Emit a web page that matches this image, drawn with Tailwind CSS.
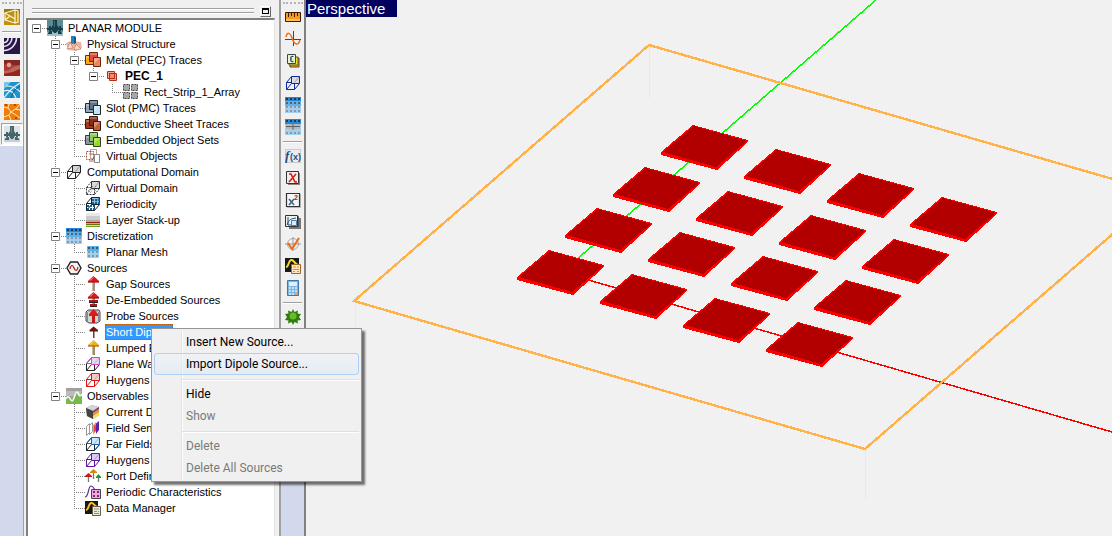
<!DOCTYPE html>
<html lang="en">
<head>
  <meta charset="UTF-8" />
  <meta name="viewport" content="width=device-width, initial-scale=1" />
  <title>Planar Module</title>
  <script src="https://cdn.jsdelivr.net/npm/@tailwindcss/browser@4"></script>
</head>
<body class="bg-[#f0f0f0] h-screen overflow-hidden flex font-['Liberation_Sans',Arial,sans-serif] text-[11px] leading-4 text-black">

  <!-- Module toolbar -->
  <nav aria-label="Modules" class="w-[23px] shrink-0 flex flex-col bg-[#d3d9ed]">
    <div id="moduleBar" class="bg-[#f0f0f0] flex flex-col items-center border-b border-white"></div>
  </nav>

  <!-- Navigation tree -->
  <section class="w-64 shrink-0 flex flex-col border-l border-[#a0a0a0] pl-0.5">
    <div class="h-[18px] shrink-0 flex items-center gap-1.5 pl-1.5 pt-1 pr-2">
      <div class="flex-1 flex flex-col gap-0.5">
        <div class="h-0.5 border-t border-[#a0a0a0] bg-white"></div>
        <div class="h-0.5 border-t border-[#a0a0a0] bg-white"></div>
      </div>
      <button type="button" aria-label="Restore panel" class="size-[11px] flex items-center justify-center border border-t-white border-l-white border-b-[#696969] border-r-[#696969]">
        <span class="w-[7px] h-1.5 border border-t-2 border-black"></span>
      </button>
    </div>
    <div class="flex-1 min-h-0 mr-1 border-2 border-r border-b-0 border-t-[#808080] border-l-[#808080] border-r-[#e3e3e3] bg-white overflow-hidden">
      <ul id="tree" role="tree" aria-label="Planar module"></ul>
    </div>
  </section>

  <!-- Tools toolbar -->
  <nav aria-label="Tools" class="w-[27px] shrink-0 flex flex-col bg-[#d3d9ed] border-x-2 border-l-[#a0a0a0] border-r-[#808080]">
    <div id="toolBar" class="bg-[#f0f0f0] flex flex-col items-center border-b-2 border-[#a0a0a0]"></div>
  </nav>

  <!-- 3D view -->
  <main class="flex-1 min-w-0 relative bg-[#f1f1f1]">
    <svg id="scene" class="absolute inset-0 w-full h-full" viewBox="306 0 806 536" preserveAspectRatio="xMinYMin slice" shape-rendering="crispEdges" role="img" aria-label="Patch array">
      <g stroke="#fae6d0" stroke-width="1">
        <path d="M355 301V351M649 45V98M865 449V500" />
      </g>
      <path d="M561 273L876 0" stroke="#00ff00" stroke-width="1.5" />
      <path d="M561 272L1112 432" stroke="#ff0000" stroke-width="1.5" />
      <g id="tiles"></g>
      <path d="M1130 184L649 45L354 301L865 449L1130 219" fill="none" stroke="#ffb347" stroke-width="2.4" />
    </svg>
    <h1 class="relative w-[91px] h-[17px] bg-[#00005f] text-white text-[15px] leading-[17px] pl-px">Perspective</h1>
  </main>

  <!-- Context menu -->
  <div role="menu" class="absolute left-[151px] top-[328px] w-[211px] p-0.5 border border-[#979797] bg-[#f0f0f0] shadow-[3px_3px_2px_rgba(0,0,0,0.55)] font-[Roboto,sans-serif] text-[12px]">
    <div class="absolute left-[29px] inset-y-0.5 w-0.5 bg-white border-l border-[#e2e3e3]"></div>
    <button type="button" role="menuitem" class="relative block w-full h-[22px] pl-8 text-left">Insert New Source...</button>
    <button type="button" role="menuitem" class="relative block w-full h-[22px] pl-[31px] text-left rounded-[3px] border border-[#aecff7] bg-linear-to-b from-[#eff3f9]/60 to-[#dfe8f6]/60">Import Dipole Source...</button>
    <div class="h-2 ml-7 pt-1"><div class="relative h-0.5 bg-white border-t border-[#e0e0e0]"></div></div>
    <button type="button" role="menuitem" class="relative block w-full h-[22px] pl-8 text-left">Hide</button>
    <button type="button" role="menuitem" disabled class="relative block w-full h-[22px] pl-8 text-left text-[#7a7a7a]">Show</button>
    <div class="h-2 ml-7 pt-1"><div class="relative h-0.5 bg-white border-t border-[#e0e0e0]"></div></div>
    <button type="button" role="menuitem" disabled class="relative block w-full h-[22px] pl-8 text-left text-[#7a7a7a]">Delete</button>
    <button type="button" role="menuitem" disabled class="relative block w-full h-[22px] pl-8 text-left text-[#7a7a7a]">Delete All Sources</button>
  </div>

  <script>
    // All icons are drawn on a 16x16 grid
    const svg = (body) => `<svg class="size-4 shrink-0" viewBox="0 0 16 16" fill="none" aria-hidden="true">${body}</svg>`;

    const cube = (line, fill, face = line, dash = "") => svg(`
      <path d="M1.5 7.500h8v7h-8zM1.5 7.500l5-6M9.5 14.500l5-6M1.5 14.500l5-6" stroke="${line}" ${dash}/>
      <path d="M6.500 1.500h8v7h-8z" fill="${fill}" stroke="${face}"/>
      <path d="M9.500 7.500l5-6" stroke="${face}" opacity=".35"/>`);

    const stack = (a, b, c, line = "#3a2a22") => svg(`
      <path d="M.5 3.500h8v9h-8z" fill="${a}" stroke="${line}"/>
      <path d="M1 4h7v2H1z" fill="#fff" opacity=".3"/>
      <path d="M4.500 .5h8v9h-8z" fill="${b}" stroke="${line}"/>
      <path d="M5 1h7v2H5z" fill="#fff" opacity=".25"/>
      <path d="M8.500 5.500h7v9h-7z" fill="${c}" stroke="${line}"/>
      <path d="M9 6h6L9 12z" fill="#fff" opacity=".3"/>`);

    const gridDots = (rows, cols, color) => {
      let d = "";
      for (const y of rows) for (const x of cols) d += `M${x} ${y}h2v2h-2z`;
      return `<path d="${d}" fill="${color}"/>`;
    };

    const arrow = (head, stem, extra = "") => svg(`
      <path d="M7 6h3v9H7z" fill="${stem}"/><path d="M7 6h1v9H7z" fill="#fff" opacity=".4"/>
      <path d="M8.500 0L14 5v1.500H3V5z" fill="${head}"/><path d="M3 6h11" stroke="#500" opacity=".5"/>
      <path d="M5 4.500L8.500 1.500" stroke="#fff" opacity=".5"/>${extra}`);

    const plane = (bg, fg, glow) => svg(`
      <path d="M0 0h16v16H0z" fill="${bg}"/>
      <path d="M0 12h16v4H0z" fill="${glow}"/>
      <path d="M6 0h4v5l2 3h4v2H0V8h4l2-3z" fill="${fg}"/>
      <path d="M2 6h2v5H2zM12 6h2v5h-2zM5 10h6l-2 3H7zM1 13l2-2h2v3H1zM15 13l-2-2h-2v3h4z" fill="${fg}"/>
      <path d="M7 1h1v6H7z" fill="${glow}" opacity=".35"/>`);

    const icons = {
      cad: svg(`<path d="M0 0h16v16H0z" fill="#c09010"/><path d="M0 0h16v5L8 2 0 8z" fill="#806008" opacity=".5"/>
        <path d="M1 4l10-3v13L1 11l5-4zM11 1l3 1v11l-3 1M1 4v7M6 7l5 3" stroke="#fff8d8" stroke-width="1.200"/>`),
      waves: svg(`<path d="M0 0h16v16H0z" fill="#2a1748"/>
        <path d="M0 4.500a4 4 0 0 0 4-4.500M0 8.500a9 9 0 0 0 8-8.500M0 12.500a13 13 0 0 0 12.500-12.500" transform="matrix(-1 0 0 1 16 0) matrix(-1 0 0 1 16 0)" stroke="#e9e4f2" stroke-width="1.600"/>`),
      terrain: svg(`<path d="M0 0h16v16H0z" fill="#a83c32"/><path d="M0 0h16v5H9L5 2 0 5z" fill="#822820"/>
        <path d="M0 11l5-1 4-3 7-2v4l-6 3-4 1-6 1z" fill="#c87468" opacity=".7"/><circle cx="5" cy="5" r="2.200" fill="#e0a094"/>
        <path d="M0 14l9-2 7-3v7H0z" fill="#94261e"/>`),
      beams: svg(`<path d="M0 0h16v16H0z" fill="#2193cc"/><path d="M0 0h7L0 7z" fill="#7cc4e4"/>
        <path d="M0 16C4 10 9 5 16 1M0 9c6-2 10 2 12 7M2 4c6 0 11 2 14 6" stroke="#e2f6ff" stroke-width="1.200"/>
        <path d="M7 16c2-6 4-9 9-12" stroke="#0a5d96"/>`),
      cracks: svg(`<path d="M0 0h16v16H0z" fill="#f07c0c"/><path d="M0 3l4 1 3 4 6-4 3-4M7 8l-2 3-5 2M5 11l2 5M7 8l5 3 4 3M4 4l1-4M11 5l5 1" stroke="#ffe9b0"/>
        <path d="M1 1h2M10 1h2M11 14h2" stroke="#c04800" stroke-width="2"/>`),
      planarActive: plane("#dfe4e5", "#44646a", "#c6d0d2"),
      planar: plane("#5d8b94", "#153f4a", "#9fc0c5"),
      physical: svg(`<path d="M0 7l5-2 10 1 1 6-6 3-8-1z" fill="#eeb4a0"/><path d="M1 13l3-7 3 6zM8 14l2-6 5 5z" fill="#f8dccf" stroke="#c08068" stroke-width=".7"/>
        <path d="M5 0h4l1 1v6l-4 1-1-1z" fill="#2c80b8"/><path d="M8 1h2v6l-2 1z" fill="#135a8a"/>`),
      metal: stack("#f6a820", "#e05038", "#ee8458", "#6a2a14"),
      pec: svg(`<path d="M3.500 3.500h7v7h-7z" fill="#f4a890" stroke="#b03018"/><path d="M5.500 5.500h7v7h-7z" fill="#ee8468" fill-opacity=".8" stroke="#b03018"/><path d="M5.500 5.500h5v5h-5z" stroke="#b03018"/>`),
      array: svg(`<path d="M.5 .5h6v6h-6zM8.500 .5h6v6h-6zM.5 8.500h6v6h-6zM8.500 8.500h6v6h-6z" fill="#a8a8a8" stroke="#444" stroke-dasharray="2 1"/>`),
      slot: stack("#93a7b8", "#5f7486", "#c2e2f6", "#20282e"),
      sheet: stack("#a03a1a", "#84301a", "#c06038", "#3c180c"),
      embedded: stack("#8898a0", "#92c860", "#98d820", "#2c4420"),
      virtualObj: svg(`<path d="M1.500 3.500h7v8h-7z" stroke="#a05040" stroke-dasharray="2 1"/><path d="M5.500 1.500h6v9h-6z" stroke="#804038" stroke-dasharray="1 1"/>
        <path d="M9.500 6.500h5v8h-5z" fill="#fff" stroke="#888"/><path d="M4 13h5M4 6h4" stroke="#c06050"/>`),
      domain: cube("#222", "#d4d4d4"),
      vdomain: cube("#333", "#d8d8d8", "#333", 'stroke-dasharray="2 1"').replace("</svg>", '<path d="M3 11l5-5M5 13l6-7M9 12l4-4" stroke="#777" stroke-dasharray="1 1"/></svg>'),
      periodic: cube("#123", "#8cc8e4").replace("</svg>", gridDots([3, 6], [7, 10, 13], "#15608c") + gridDots([9, 12], [2, 5, 8], "#15608c") + "</svg>"),
      layers: svg(`<path d="M1 2h14v8H1z" fill="#ccc"/><path d="M1 1h14v3H1z" fill="#e9e9e9"/><path d="M1 8h14v2H1z" fill="#aaa"/>
        <path d="M1 10.500h14" stroke="#9a2010"/><path d="M1 11.500h14" stroke="#e8b020"/><path d="M1 12.500h14" stroke="#6a7010"/><path d="M1 13.500h14" stroke="#f0e040"/><path d="M1 14.500h14" stroke="#70a020"/>`),
      mesh: svg(`<path d="M0 0h16v16H0z" fill="#a4cfec"/><path d="M0 0h16v9H0z" fill="#62b0e4"/><path d="M0 0h16v4H0z" fill="#2388d8"/>${gridDots([1], [1, 5, 9, 13], "#263850")}${gridDots([5], [1, 5, 9, 13], "#46647e")}${gridDots([9, 13], [1, 5, 9, 13], "#8599a8")}`),
      meshSmall: svg(`<path d="M2 2h12v12H2z" fill="#9fd0f0"/><path d="M2 2h12v5H2z" fill="#5eb0e6"/>${gridDots([3], [3, 7, 11], "#3a5878")}${gridDots([7, 11], [3, 7, 11], "#8098a8")}`),
      meshCut: svg(`<path d="M0 0h16v16H0z" fill="#a4cfec"/><path d="M0 0h16v5H0z" fill="#2388d8"/>${gridDots([1], [1, 5, 9, 13], "#263850")}${gridDots([13], [1, 5, 9, 13], "#8599a8")}<path d="M1 5h14v5H1z" fill="#b4b8ba"/><path d="M1 7.500h14M8 5v6" stroke="#5c6468"/>`),
      sources: svg(`<path d="M4.500 2h7l3.500 6-3.500 6h-7L1 8z" fill="#f2f2f2" stroke="#222" stroke-width="1.400"/><path d="M4 9c1-5 3-4 4-1s3 4 4-1" stroke="#c01010" stroke-width="1.200"/>`),
      gap: arrow("#e01818", "#a89080"),
      deembed: arrow("#e01818", "#888", '<path d="M4 8h9v2H4zM5 12h7v2H5z" fill="#b01818"/><path d="M4 10.500h9M5 14.500h7" stroke="#222"/>'),
      probe: svg(`<path d="M3 2h11l1 2v9l-3 2H4l-3-2V4z" fill="#d4d4d4" stroke="#444"/><path d="M3 3h10M2.500 4v9M13.500 4v9" stroke="#888"/><path d="M7 6h3v9H7z" fill="#c01818"/><path d="M8.500 1L13 6v2H4V6z" fill="#e01818"/>`),
      dipole: svg(`<path d="M8 7h1.500v7H8z" fill="#604040"/><path d="M8.500 2.500L13 6v1.500H4.500V6z" fill="#6a1414"/>`),
      lumped: arrow("#f0b010", "#a09060"),
      planeWave: cube("#222", "#dcdce4", "#e040d8").replace("</svg>", '<path d="M1.500 7.500l5-6M1.500 7.500h5" stroke="#e040d8"/></svg>'),
      huygensSrc: cube("#d81414", "#f4cccc"),
      observables: svg(`<path d="M0 0h16v16H0z" fill="#a0a0a0"/><path d="M0 3h16v5H0z" fill="#bcbcbc"/><path d="M0 10l3-3 3 6 4-9 3 6 3-8v14H0z" fill="#78b848"/><path d="M0 11c3-6 4 2 6 2s3-9 5-9 2 7 5 2" stroke="#f4fff0" stroke-width="1.500"/>`),
      current: svg(`<path d="M1 4l6-3 7 2v8l-6 4-6-3z" fill="#888"/><path d="M1 4l6-3 7 2-6 4z" fill="#d4d4d4"/><path d="M1 4l7 3v8l-6-3z" fill="#444"/><path d="M8 7l6-4v2L8 9z" fill="#8030a0"/><path d="M8 9l6-4v3l-6 4z" fill="#f09030"/><path d="M8 12l6-4v3l-6 4z" fill="#f8e060"/>`),
      field: svg(`<path d="M1.500 6.500l3-3v9l-3 3zM4.500 5.500l3-3v9l-3 3z" fill="#fff" stroke="#999"/><path d="M8 5l3-3v9l-3 4z" fill="#f0a040"/><path d="M11 3.500l3-2.500v9l-3 4z" fill="#6020b0"/><path d="M9 6l2-1v6l-2 1z" fill="#f04040"/>`),
      far: cube("#222", "#cfe6f8", "#1464b0").replace("</svg>", '<path d="M1.500 7.500l5-6M9.500 14.500l5-6M1.500 7.500h5" stroke="#1464b0"/></svg>'),
      huygensObs: cube("#5a189c", "#dccdf0"),
      ports: svg(`<path d="M3.500 8v6M8.500 4v7M13.500 8v6" stroke="#777" stroke-width="1.300"/><path d="M3.500 5L7 8v1H0V8z" fill="#d01818"/><path d="M8.500 1L12 4v1H5V4z" fill="#d88818"/><path d="M13.500 6L16 9v1h-5V9z" fill="#189828"/>`),
      periodicChar: svg(`<path d="M0 13C4 13 3 2 6 2s3 4 5 5" stroke="#5828a0" stroke-width="1.200"/><path d="M6.500 5.500h9v9h-9z" fill="#f0a8e4" stroke="#444"/><path d="M8 7h2v2H8zM12 7h2v2h-2zM8 11h2v2H8zM12 11h2v2h-2z" fill="#902080"/>`),
      data: svg(`<path d="M0 1h13v13H0z" fill="#181818"/><path d="M1 10c3 0 2-6 5-7s3 4 7 4" stroke="#f8c020" stroke-width="2"/><path d="M7.500 6.500h8v9h-8z" fill="#f0ead8" stroke="#665e50"/><path d="M9 9h5M9 11.500h3M13 11.500h1M9 13.500h5" stroke="#999078"/>`),
      ruler: svg(`<path d="M.5 3.500h15v9H.5z" fill="#f89820" stroke="#3a1c04"/><path d="M1 10h14v2H1z" fill="#ffc060"/><path d="M3.500 4v4M6.500 4v3M9.500 4v4M12.500 4v3" stroke="#3a1c04"/>`),
      sine: svg(`<path d="M0 8.500h16M8.500 0v15" stroke="#444"/><path d="M1 6c1-5 4-5 6 1s6 9 8 2" stroke="#f07018" stroke-width="1.500"/>`),
      epsilon: svg(`<path d="M5 5h9v9H5z" fill="#f0a030" stroke="#604810"/><path d="M4 4h9v8H4z" fill="#e8e820" stroke="#555"/><path d="M2.500 1.500h8v9h-8z" fill="#eef0c8" stroke="#444"/><path d="M8.500 3.500C5 3 5 6 7 6 5 6 5 9 8.500 8.500" stroke="#1c5080" stroke-width="1.200"/>`),
      box: cube("#1028a0", "#dcdcdc"),
      fx: svg(`<path d="M.5 1.500h15v13H.5z" fill="#e8ecf2" stroke="#aaa" stroke-dasharray="1 1"/><text x="0" y="12" font-family="Liberation Serif" font-size="13" font-style="italic" font-weight="bold" fill="#24507c">f</text><text x="5" y="12" font-family="Liberation Sans" font-size="9" font-weight="bold" fill="#24507c">(x)</text>`),
      varX: svg(`<path d="M3 3h12v12H3z" fill="#888"/><path d="M1.500 1.500h12v12h-12z" fill="#f4ecec" stroke="#333"/><path d="M4 4h2l4 8h2M11 4L4 12" stroke="#d02010" stroke-width="1.600"/>`),
      square: svg(`<path d="M2 2h14v14H2z" fill="#bbb"/><path d="M1.500 1.500h13v13h-13z" fill="#f4f6f8" stroke="#333" stroke-width="1.200"/><path d="M4 7l5 6M9 7l-5 6" stroke="#386890" stroke-width="1.600"/><text x="9" y="8" font-family="Liberation Sans" font-size="7" font-weight="bold" fill="#b02020">2</text>`),
      plot: svg(`<path d="M4 4h12v11H4z" fill="#777"/><path d="M2.500 2.500h11v10h-11z" fill="#aaa" stroke="#555"/><path d="M.5 1.500h12v11H.5z" fill="#eef4e8" stroke="#333"/><path d="M2 11C4 5 6 5 11 4M3 3v8h8" stroke="#1c5090"/><path d="M6.500 6.500h5v5h-5z" fill="#dceaf8" stroke="#5080b0"/>`),
      check: svg(`<circle cx="8" cy="8" r="5.500" stroke="#aaa"/><path d="M0 8h16M8 1v14" stroke="#999"/><path d="M3 7l4 6 7-11" stroke="#f06818" stroke-width="2"/>`),
      dataOrange: svg(`<path d="M0 0h14v14H0z" fill="#181818"/><path d="M1 9c3 0 2-6 5-7s3 4 7 5" stroke="#f8d820" stroke-width="2"/><path d="M6.500 6.500h9v9h-9z" fill="#ffe8c0" stroke="#a06828"/><path d="M8 9h3M12 9h2M8 11.500h6M8 13.500h2M12 13.500h2" stroke="#f08820"/>`),
      calc: svg(`<path d="M2.500 .5h11v15h-11z" fill="#7cb4e0" stroke="#3878b0"/><path d="M4 2h8v4H4z" fill="#e4f0f8"/>${gridDots([7, 10, 13], [4, 7, 10], "#c4e0f8")}<path d="M10 12h2v3h-2z" fill="#e8a060"/>`),
      burst: svg(`<path d="M8 0l1.500 3L13 1.500l-.5 3L16 5l-2 3 2 3-3.500.5.5 3-3.500-1.500L8 16l-1.500-3L3 14.500l.5-3L0 11l2-3-2-3 3.500-.5-.5-3L6.500 3z" fill="#2f7c10"/><circle cx="8" cy="7" r="3.500" fill="#68bc28"/>`),
    };

    const separator = '<div class="w-[19px] h-0.5 mt-[3px] mb-0.5 bg-white border-t border-[#a0a0a0]"></div>';
    const grip = '<div class="w-5 h-1.5 pt-0.5"><div class="h-0.5 border-t-2 border-dotted border-[#b4b4b4]"></div></div>';

    function toolbar(id, items) {
      document.getElementById(id).innerHTML = grip + items.map(([icon, label, active]) => {
        if (!icon) return separator;
        const state = active ? "border border-t-[#a0a0a0] border-l-[#a0a0a0] border-b-white border-r-white bg-[#f8f8f8]" : "";
        return `<button type="button" aria-label="${label}" class="w-[22px] h-[22px] flex items-center justify-center ${state}">${icons[icon]}</button>`;
      }).join("");
    }

    toolbar("moduleBar", [
      ["cad", "CAD"], [], ["waves", "Waves"], ["terrain", "Terrain"], ["beams", "Beams"],
      ["cracks", "Propagation"], ["planarActive", "Planar", true],
    ]);

    toolbar("toolBar", [
      ["ruler", "Units"], ["sine", "Frequency"], ["epsilon", "Materials"], ["box", "Domain"],
      ["mesh", "Mesh"], ["meshCut", "Mesh settings"], [],
      ["fx", "Functions"], ["varX", "Variables"], ["square", "Expressions"], ["plot", "Plots"],
      ["check", "Validate"], ["dataOrange", "Data manager"], ["calc", "Calculator"], [],
      ["burst", "Simulate"],
    ]);

    // level, icon, label, expandable
    const nodes = [
      [0, "planar", "PLANAR MODULE", true],
      [1, "physical", "Physical Structure", true],
      [2, "metal", "Metal (PEC) Traces", true],
      [3, "pec", "PEC_1", true],
      [4, "array", "Rect_Strip_1_Array"],
      [2, "slot", "Slot (PMC) Traces"],
      [2, "sheet", "Conductive Sheet Traces"],
      [2, "embedded", "Embedded Object Sets"],
      [2, "virtualObj", "Virtual Objects"],
      [1, "domain", "Computational Domain", true],
      [2, "vdomain", "Virtual Domain"],
      [2, "periodic", "Periodicity"],
      [2, "layers", "Layer Stack-up"],
      [1, "mesh", "Discretization", true],
      [2, "meshSmall", "Planar Mesh"],
      [1, "sources", "Sources", true],
      [2, "gap", "Gap Sources"],
      [2, "deembed", "De-Embedded Sources"],
      [2, "probe", "Probe Sources"],
      [2, "dipole", "Short Dipoles"],
      [2, "lumped", "Lumped Elements"],
      [2, "planeWave", "Plane Waves"],
      [2, "huygensSrc", "Huygens Sources"],
      [1, "observables", "Observables", true],
      [2, "current", "Current Distributions"],
      [2, "field", "Field Sensors"],
      [2, "far", "Far Fields"],
      [2, "huygensObs", "Huygens Surfaces"],
      [2, "ports", "Port Definitions"],
      [2, "periodicChar", "Periodic Characteristics"],
      [2, "data", "Data Manager"],
    ];

    // Does a later sibling exist at this level under the same parent?
    function continues(index, level) {
      for (let i = index + 1; i < nodes.length; i++) {
        if (nodes[i][0] < level) return false;
        if (nodes[i][0] === level) return true;
      }
      return false;
    }

    function guide(d) {
      return `<svg class="w-[19px] h-4 shrink-0" viewBox="0 0 19 16" fill="none" stroke="#808080" stroke-dasharray="1 1" shape-rendering="crispEdges" aria-hidden="true"><path d="${d}"/></svg>`;
    }

    document.getElementById("tree").innerHTML = nodes.map(([level, icon, label, open], i) => {
      let cells = "";
      for (let l = 0; l < level; l++) cells += guide(continues(i, l) ? "M8.5 0V16" : "");
      let d = "M8 8.500H19";
      if (level > 0) d += continues(i, level) ? "M8.5 0V16" : "M8.5 0V8";
      const own = open
        ? `<button type="button" aria-label="Collapse ${label}" class="relative flex">${guide(d)}<svg class="absolute left-1 top-1 size-[9px]" viewBox="0 0 9 9"><path d="M.5 .5h8v8h-8z" fill="#fff" stroke="#808080"/><path d="M2 4.500h5" stroke="#000"/></svg></button>`
        : guide(d);
      const selected = label === "Short Dipoles";
      const style = selected ? "bg-[#3399ff] text-white outline-1 -outline-offset-1 outline-dotted outline-[#c05800]"
        : label === "PEC_1" ? "font-bold text-[12px]" : "";
      return `<li role="treeitem" aria-level="${level + 1}" aria-selected="${selected}" class="flex h-4">${cells}${own}${icons[icon]}
        <button type="button" class="ml-1 px-px whitespace-nowrap ${style}">${label}</button></li>`;
    }).join("");

    // 4x4 array of slanted patches
    let tiles = "";
    for (let row = 3; row >= 0; row--) {
      for (let col = 0; col < 4; col++) {
        const x = col * 83 + row * 48;
        const y = col * 24 - Math.round(row * 41.6);
        tiles += `<g transform="translate(${x} ${y})">
          <path d="M549 250L604 265V267L573 295L517 280V277Z" fill="#ff0000"/>
          <path d="M550 251L603 266L572 292L519 277Z" fill="#b20000"/></g>`;
      }
    }
    document.getElementById("tiles").innerHTML = tiles;
  </script>
</body>
</html>
